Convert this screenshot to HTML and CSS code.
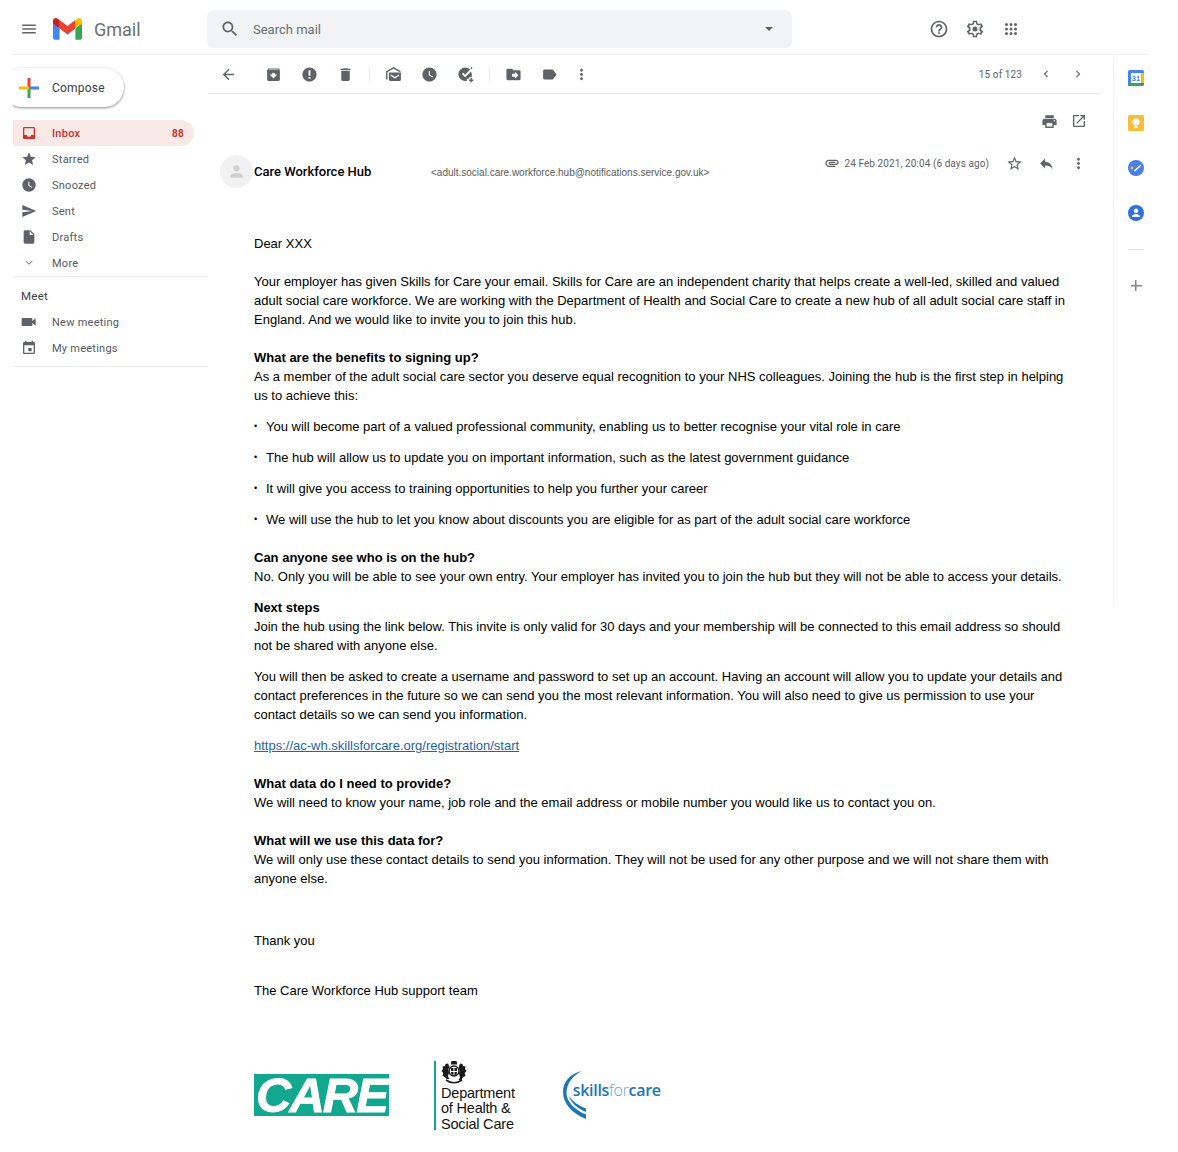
FILE: index.html
```html
<!DOCTYPE html>
<html lang="en">
<head>
<meta charset="utf-8">
<title>Gmail</title>
<link rel="stylesheet" href="styles.css">
</head>
<body>
<svg class="sprite" aria-hidden="true">
  <symbol id="i-menu" viewBox="0 0 24 24"><path d="M3 18h18v-2H3v2zm0-5h18v-2H3v2zm0-7v2h18V6H3z"/></symbol>
  <symbol id="i-search" viewBox="0 0 24 24"><path d="M15.5 14h-.79l-.28-.27C15.41 12.59 16 11.11 16 9.5 16 5.91 13.09 3 9.5 3S3 5.91 3 9.5 5.91 16 9.5 16c1.61 0 3.09-.59 4.23-1.57l.27.28v.79l5 4.99L20.49 19l-4.99-5zm-6 0C7.01 14 5 11.99 5 9.5S7.01 5 9.5 5 14 7.01 14 9.5 11.99 14 9.5 14z"/></symbol>
  <symbol id="i-help" viewBox="0 0 24 24"><path d="M11 18h2v-2h-2v2zm1-16C6.48 2 2 6.48 2 12s4.48 10 10 10 10-4.48 10-10S17.52 2 12 2zm0 18c-4.41 0-8-3.59-8-8s3.59-8 8-8 8 3.59 8 8-3.59 8-8 8zm0-14c-2.21 0-4 1.79-4 4h2c0-1.1.9-2 2-2s2 .9 2 2c0 2-3 1.75-3 5h2c0-2.25 3-2.5 3-5 0-2.21-1.79-4-4-4z"/></symbol>
  <symbol id="i-gear" viewBox="0 0 24 24"><path fill-rule="evenodd" d="M19.43 12.98c.04-.32.07-.64.07-.98s-.03-.66-.07-.98l2.11-1.65c.19-.15.24-.42.12-.64l-2-3.46c-.12-.22-.39-.3-.61-.22l-2.49 1c-.52-.4-1.08-.73-1.69-.98l-.38-2.65C14.46 2.18 14.25 2 14 2h-4c-.25 0-.46.18-.49.42l-.38 2.65c-.61.25-1.17.59-1.69.98l-2.49-1c-.23-.09-.49 0-.61.22l-2 3.46c-.13.22-.07.49.12.64l2.11 1.65c-.04.32-.07.65-.07.98s.03.66.07.98l-2.11 1.65c-.19.15-.24.42-.12.64l2 3.46c.12.22.39.3.61.22l2.49-1c.52.4 1.08.73 1.69.98l.38 2.65c.03.24.24.42.49.42h4c.25 0 .46-.18.49-.42l.38-2.65c.61-.25 1.17-.59 1.69-.98l2.49 1c.23.09.49 0 .61-.22l2-3.46c.12-.22.07-.49-.12-.64l-2.11-1.65zM17.5 12c0 .4-.05.8-.14 1.2l-.1.6 1.83 1.43-1.1 1.9-2.16-.87-.5.38c-.44.33-.9.6-1.4.8l-.57.24-.33 2.3h-2.06l-.33-2.3-.57-.24c-.5-.2-.96-.47-1.4-.8l-.5-.38-2.16.87-1.1-1.9 1.83-1.43-.1-.6c-.09-.4-.14-.8-.14-1.2s.05-.8.14-1.2l.1-.6-1.83-1.43 1.1-1.9 2.16.87.5-.38c.44-.33.9-.6 1.4-.8l.57-.24.33-2.3h2.06l.33 2.3.57.24c.5.2.96.47 1.4.8l.5.38 2.16-.87 1.1 1.9-1.83 1.43.1.6c.09.4.14.8.14 1.2z"/><circle cx="12" cy="12" r="3"/></symbol>
  <symbol id="i-apps" viewBox="0 0 24 24"><path d="M6 8a2 2 0 100-4 2 2 0 000 4zm6 0a2 2 0 100-4 2 2 0 000 4zm6 0a2 2 0 100-4 2 2 0 000 4zM6 14a2 2 0 100-4 2 2 0 000 4zm6 0a2 2 0 100-4 2 2 0 000 4zm6 0a2 2 0 100-4 2 2 0 000 4zM6 20a2 2 0 100-4 2 2 0 000 4zm6 0a2 2 0 100-4 2 2 0 000 4zm6 0a2 2 0 100-4 2 2 0 000 4z"/></symbol>
  <symbol id="i-back" viewBox="0 0 24 24"><path d="M20 11H7.83l5.59-5.59L12 4l-8 8 8 8 1.41-1.41L7.83 13H20v-2z"/></symbol>
  <symbol id="i-archive" viewBox="0 0 24 24"><path d="M20.54 5.23l-1.39-1.68C18.88 3.21 18.47 3 18 3H6c-.47 0-.88.21-1.16.55L3.46 5.23C3.17 5.57 3 6.02 3 6.5V19c0 1.1.9 2 2 2h14c1.1 0 2-.9 2-2V6.5c0-.48-.17-.93-.46-1.27zM12 17.5L6.5 12H10v-2h4v2h3.5L12 17.5zM5.12 5l.81-1h12l.94 1H5.12z"/></symbol>
  <symbol id="i-report" viewBox="0 0 24 24"><path d="M12 2C6.48 2 2 6.48 2 12s4.48 10 10 10 10-4.48 10-10S17.52 2 12 2zm1.3 16h-2.6v-2.6h2.6V18zm0-4.4h-2.6V6h2.6v7.6z"/></symbol>
  <symbol id="i-delete" viewBox="0 0 24 24"><path d="M6 19c0 1.1.9 2 2 2h8c1.1 0 2-.9 2-2V7H6v12zM19 4h-3.5l-1-1h-5l-1 1H5v2h14V4z"/></symbol>
  <symbol id="i-unread" viewBox="0 0 24 24"><path d="M12 1.500L1.500 7.500V19h2V8.600L12 3.800l8.500 4.700L22.500 7.500z"/><path fill-rule="evenodd" d="M5.500 9h17v10a2 2 0 01-2 2h-13a2 2 0 01-2-2zM8 11.500l6 4 6-4v2.200l-6 4-6-4z"/></symbol>
  <symbol id="i-clock" viewBox="0 0 24 24"><path d="M12 2C6.480 2 2 6.480 2 12s4.480 10 10 10 10-4.480 10-10S17.520 2 12 2zm4.200 14.200L11 13V7h1.500v5.200l4.500 2.700-.8 1.300z"/></symbol>
  <symbol id="i-task" viewBox="0 0 24 24"><path fill-rule="evenodd" d="M11.500 2a9.500 9.500 0 000 19c.9 0 1.700-.1 2.500-.3V18h3v-2h3.600c.3-1.100.4-2.200.4-3.400 0-1.800-.5-3.500-1.300-5L11.500 15.800 7 11.300l1.700-1.700 2.800 2.800 7.100-7.300A9.500 9.500 0 0011.500 2z"/><path d="M21.800 2.800L20.400 1.500l-1.600 1.800 1.400 1.300zM19 17h2v2h2v2h-2v2h-2v-2h-2v-2h2z"/></symbol>
  <symbol id="i-move" viewBox="0 0 24 24"><path d="M20 6h-8l-2-2H4c-1.100 0-2 .9-2 2v12c0 1.100.9 2 2 2h16c1.100 0 2-.9 2-2V8c0-1.100-.9-2-2-2zm-6 12v-3h-4v-4h4V8l5 5-5 5z"/></symbol>
  <symbol id="i-label" viewBox="0 0 24 24"><path d="M17.630 5.840C17.270 5.330 16.670 5 16 5L5 5.010C3.900 5.010 3 5.900 3 7v10c0 1.100.9 1.990 2 1.990L16 19c.67 0 1.270-.33 1.630-.84L22 12l-4.370-6.160z"/></symbol>
  <symbol id="i-more" viewBox="0 0 24 24"><path d="M12 8c1.100 0 2-.9 2-2s-.9-2-2-2-2 .9-2 2 .9 2 2 2zm0 2c-1.100 0-2 .9-2 2s.9 2 2 2 2-.9 2-2-.9-2-2-2zm0 6c-1.100 0-2 .9-2 2s.9 2 2 2 2-.9 2-2-.9-2-2-2z"/></symbol>
  <symbol id="i-prev" viewBox="0 0 24 24"><path d="M15.410 7.410L14 6l-6 6 6 6 1.410-1.410L10.830 12z"/></symbol>
  <symbol id="i-next" viewBox="0 0 24 24"><path d="M10 6L8.590 7.410 13.170 12l-4.580 4.590L10 18l6-6z"/></symbol>
  <symbol id="i-print" viewBox="0 0 24 24"><path d="M19 8H5c-1.660 0-3 1.340-3 3v6h4v4h12v-4h4v-6c0-1.660-1.340-3-3-3zm-3 11H8v-5h8v5zm3-7c-.55 0-1-.45-1-1s.45-1 1-1 1 .45 1 1-.45 1-1 1zm-1-9H6v4h12V3z"/></symbol>
  <symbol id="i-open" viewBox="0 0 24 24"><path d="M19 19H5V5h7V3H5c-1.110 0-2 .9-2 2v14c0 1.100.89 2 2 2h14c1.100 0 2-.9 2-2v-7h-2v7zM14 3v2h3.590l-9.830 9.830 1.410 1.410L19 6.410V10h2V3h-7z"/></symbol>
  <symbol id="i-star-o" viewBox="0 0 24 24"><path d="M22 9.240l-7.190-.62L12 2 9.190 8.630 2 9.240l5.460 4.730L5.820 21 12 17.270 18.180 21l-1.630-7.030L22 9.240zM12 15.400l-3.760 2.270 1-4.280-3.320-2.880 4.380-.38L12 6.100l1.710 4.040 4.380.38-3.320 2.880 1 4.280L12 15.400z"/></symbol>
  <symbol id="i-star" viewBox="0 0 24 24"><path d="M12 17.270L18.180 21l-1.640-7.030L22 9.240l-7.190-.61L12 2 9.190 8.630 2 9.240l5.460 4.730L5.820 21z"/></symbol>
  <symbol id="i-reply" viewBox="0 0 24 24"><path d="M10 9V5l-7 7 7 7v-4.100c5 0 8.500 1.600 11 5.100-1-5-4-10-11-11z"/></symbol>
  <symbol id="i-attach" viewBox="0 0 24 24"><path d="M2 12.500C2 9.460 4.460 7 7.500 7H18c2.210 0 4 1.790 4 4s-1.790 4-4 4H9.500C8.120 15 7 13.880 7 12.500S8.120 10 9.500 10H17v2H9.410c-.55 0-.55 1 0 1H18c1.100 0 2-.9 2-2s-.9-2-2-2H7.500C5.570 9 4 10.570 4 12.500S5.570 16 7.500 16H17v2H7.500C4.460 18 2 15.540 2 12.500z"/></symbol>
  <symbol id="i-inbox" viewBox="0 0 24 24"><path d="M19 3H4.990c-1.110 0-1.980.89-1.980 2L3 19c0 1.100.88 2 1.990 2H19c1.100 0 2-.9 2-2V5c0-1.110-.9-2-2-2zm0 12h-4c0 1.660-1.350 3-3 3s-2.990-1.340-3-3H4.990V5H19v10z"/></symbol>
  <symbol id="i-send" viewBox="0 0 24 24"><path d="M2.010 21L23 12 2.010 3 2 10l15 2-15 2z"/></symbol>
  <symbol id="i-draft" viewBox="0 0 24 24"><path d="M6 2c-1.100 0-1.990.9-1.990 2L4 20c0 1.100.89 2 1.990 2H18c1.100 0 2-.9 2-2V8l-6-6H6zm7 7V3.500L18.500 9H13z"/></symbol>
  <symbol id="i-expand" viewBox="0 0 24 24"><path d="M16.590 8.590L12 13.170 7.410 8.590 6.700 9.300 12 14.600l5.300-5.300z"/></symbol>
  <symbol id="i-video" viewBox="0 0 24 24"><path d="M17 10.500V7c0-.55-.45-1-1-1H2c-.55 0-1 .45-1 1v10c0 .55.45 1 1 1h14c.55 0 1-.45 1-1v-3.500l5 4v-11l-5 4z"/></symbol>
  <symbol id="i-event" viewBox="0 0 24 24"><path d="M16 12h-5v5h5v-5zM16 1v2H8V1H6v2H5c-1.110 0-1.990.9-1.990 2L3 19c0 1.100.89 2 2 2h14c1.100 0 2-.9 2-2V5c0-1.100-.9-2-2-2h-1V1h-2zm3 18H5V8h14v11z"/></symbol>
  <symbol id="i-person" viewBox="0 0 24 24"><path d="M12 12c2.210 0 4-1.790 4-4s-1.790-4-4-4-4 1.790-4 4 1.790 4 4 4zm0 2c-2.670 0-8 1.340-8 4v2h16v-2c0-2.660-5.330-4-8-4z"/></symbol>
</svg>

<div class="page">
  <header class="topbar">
    <div class="brand">
      <svg class="ico ico-18 menu-ico"><use href="#i-menu"/></svg>
      <svg class="gmail-m" viewBox="0 0 256 193">
        <path fill="#4285F4" d="M58.180 192.050V93.140L27.500 65.080 0 49.500v125.100c0 9.660 7.830 17.450 17.450 17.450h40.730z"/>
        <path fill="#34A853" d="M197.820 192.050h40.730c9.650 0 17.450-7.830 17.450-17.450V49.500l-31.160 17.840-27.020 25.800v98.910z"/>
        <path fill="#EA4335" d="M58.180 93.140l-4.170-38.650 4.170-36.990L128 69.870l69.820-52.370 4.670 34.990-4.670 40.650L128 145.500z"/>
        <path fill="#FBBC04" d="M197.820 17.500V93.140L256 49.500V26.230c0-21.590-24.640-33.880-41.890-20.940l-16.290 12.210z"/>
        <path fill="#C5221F" d="M0 49.500l26.760 20.070L58.180 93.140V17.500L41.890 5.290C24.610-7.650 0 4.640 0 26.230V49.500z"/>
      </svg>
      <span class="gmail-word">Gmail</span>
    </div>
    <div class="search">
      <svg class="ico ico-20"><use href="#i-search"/></svg>
      <span class="search-text">Search mail</span>
      <span class="caret"></span>
    </div>
    <div class="top-actions">
      <span class="btn-36"><svg class="ico ico-20"><use href="#i-help"/></svg></span>
      <span class="btn-36"><svg class="ico ico-20"><use href="#i-gear"/></svg></span>
      <span class="btn-36"><svg class="ico ico-18"><use href="#i-apps"/></svg></span>
    </div>
  </header>

  <div class="layout">
    <nav class="sidebar">
      <button class="compose">
        <svg class="compose-plus" viewBox="0 0 20 20">
          <rect x="8.500" y="0" width="3" height="10" fill="#EA4335"/>
          <rect x="10" y="8.500" width="10" height="3" fill="#4285F4"/>
          <rect x="8.500" y="10" width="3" height="10" fill="#34A853"/>
          <rect x="0" y="8.500" width="10" height="3" fill="#FBBC04"/>
        </svg>
        <span>Compose</span>
      </button>
      <ul class="nav-list">
        <li class="nav-item active"><svg class="ico nav-ico"><use href="#i-inbox"/></svg><span class="nav-label">Inbox</span><span class="count">88</span></li>
        <li class="nav-item"><svg class="ico nav-ico"><use href="#i-star"/></svg><span class="nav-label">Starred</span></li>
        <li class="nav-item"><svg class="ico nav-ico"><use href="#i-clock"/></svg><span class="nav-label">Snoozed</span></li>
        <li class="nav-item"><svg class="ico nav-ico"><use href="#i-send"/></svg><span class="nav-label">Sent</span></li>
        <li class="nav-item"><svg class="ico nav-ico"><use href="#i-draft"/></svg><span class="nav-label">Drafts</span></li>
        <li class="nav-item"><svg class="ico nav-ico"><use href="#i-expand"/></svg><span class="nav-label">More</span></li>
      </ul>
      <div class="meet">
        <div class="meet-title">Meet</div>
        <ul class="nav-list">
          <li class="nav-item"><svg class="ico nav-ico"><use href="#i-video"/></svg><span class="nav-label">New meeting</span></li>
          <li class="nav-item"><svg class="ico nav-ico"><use href="#i-event"/></svg><span class="nav-label">My meetings</span></li>
        </ul>
      </div>
    </nav>

    <main class="main">
      <div class="toolbar">
        <span class="tool back"><svg class="ico ico-17"><use href="#i-back"/></svg></span>
        <span class="tool"><svg class="ico ico-17"><use href="#i-archive"/></svg></span>
        <span class="tool"><svg class="ico ico-17"><use href="#i-report"/></svg></span>
        <span class="tool"><svg class="ico ico-17"><use href="#i-delete"/></svg></span>
        <span class="sep"></span>
        <span class="tool"><svg class="ico ico-17"><use href="#i-unread"/></svg></span>
        <span class="tool"><svg class="ico ico-17"><use href="#i-clock"/></svg></span>
        <span class="tool"><svg class="ico ico-17"><use href="#i-task"/></svg></span>
        <span class="sep"></span>
        <span class="tool"><svg class="ico ico-17"><use href="#i-move"/></svg></span>
        <span class="tool"><svg class="ico ico-17"><use href="#i-label"/></svg></span>
        <span class="tool narrow"><svg class="ico ico-17"><use href="#i-more"/></svg></span>
        <span class="pager">15 of 123</span>
        <span class="tool pg"><svg class="ico ico-14"><use href="#i-prev"/></svg></span>
        <span class="tool pg"><svg class="ico ico-14"><use href="#i-next"/></svg></span>
      </div>

      <div class="print-row">
        <span class="print-btn"><svg class="ico ico-17"><use href="#i-print"/></svg></span>
        <span class="print-btn"><svg class="ico ico-16"><use href="#i-open"/></svg></span>
      </div>

      <div class="msg-head">
        <span class="avatar"><svg class="avatar-ico"><use href="#i-person"/></svg></span>
        <div class="sender">
          <span class="sender-name">Care Workforce Hub</span>
          <span class="sender-mail">&lt;adult.social.care.workforce.hub@notifications.service.gov.uk&gt;</span>
        </div>
        <div class="msg-meta">
          <svg class="ico ico-16"><use href="#i-attach"/></svg>
          <span class="msg-date">24 Feb 2021, 20:04 (6 days ago)</span>
          <span class="meta-btn first"><svg class="ico ico-17"><use href="#i-star-o"/></svg></span>
          <span class="meta-btn"><svg class="ico ico-17"><use href="#i-reply"/></svg></span>
          <span class="meta-btn"><svg class="ico ico-17"><use href="#i-more"/></svg></span>
        </div>
      </div>

      <article class="mail">
        <p class="gap-l">Dear XXX</p>
        <p class="gap-l">Your employer has given Skills for Care your email. Skills for Care are an independent charity that helps create a well-led, skilled and valued adult social care workforce. We are working with the Department of Health and Social Care to create a new hub of all adult social care staff in England. And we would like to invite you to join this hub.</p>
        <h3>What are the benefits to signing up?</h3>
        <p class="gap-s">As a member of the adult social care sector you deserve equal recognition to your NHS colleagues. Joining the hub is the first step in helping us to achieve this:</p>
        <ul class="bullets">
          <li>You will become part of a valued professional community, enabling us to better recognise your vital role in care</li>
          <li>The hub will allow us to update you on important information, such as the latest government guidance</li>
          <li>It will give you access to training opportunities to help you further your career</li>
          <li>We will use the hub to let you know about discounts you are eligible for as part of the adult social care workforce</li>
        </ul>
        <h3>Can anyone see who is on the hub?</h3>
        <p class="gap-s">No. Only you will be able to see your own entry. Your employer has invited you to join the hub but they will not be able to access your details.</p>
        <h3>Next steps</h3>
        <p class="gap-s">Join the hub using the link below. This invite is only valid for 30 days and your membership will be connected to this email address so should not be shared with anyone else.</p>
        <p class="gap-s">You will then be asked to create a username and password to set up an account. Having an account will allow you to update your details and contact preferences in the future so we can send you the most relevant information. You will also need to give us permission to use your contact details so we can send you information.</p>
        <p class="gap-l"><a class="mail-link" href="#">https://ac-wh.skillsforcare.org/registration/start</a></p>
        <h3>What data do I need to provide?</h3>
        <p class="gap-l">We will need to know your name, job role and the email address or mobile number you would like us to contact you on.</p>
        <h3>What will we use this data for?</h3>
        <p class="gap-xl">We will only use these contact details to send you information. They will not be used for any other purpose and we will not share them with anyone else.</p>
        <p class="gap-team">Thank you</p>
        <p>The Care Workforce Hub support team</p>

        <div class="logos">
          <div class="logo-care">CARE</div>
          <div class="logo-dhsc">
            <svg class="crest" viewBox="0 0 26 23">
              <path fill="#1a1a1a" d="M10.500 0h5l.8 3.500h-6.600z"/>
              <path fill="#1a1a1a" d="M7 2.500l1.500 3.500-1.500 2.500 1 3-1 4 1.500 2.500H5.500L4 16 1.500 15l.8-3-1.800-2 1.500-2-.5-2.500 2.500-.5L4.500 3z"/>
              <path fill="#1a1a1a" d="M19 2.500l2.500.5.5 2 2.500.5-.5 2.500 1.500 2-1.800 2 .8 3-2.500 1-1.500 3h-3l1.500-2.500-1-4 1-3-1.500-2.500z"/>
              <circle cx="13" cy="10" r="5.800" fill="#1a1a1a"/>
              <circle cx="13" cy="10" r="4.300" fill="#fff"/>
              <path fill="#1a1a1a" d="M10 7h6v4.500c0 1.500-1.500 2.500-3 3-1.500-.5-3-1.500-3-3z"/>
              <path fill="#fff" d="M12.500 7h1v7h-1zM10 10h6v1h-6z"/>
              <path fill="none" stroke="#1a1a1a" stroke-width="1.600" d="M5 19c5 3.500 11 3.500 16 0"/>
            </svg>
            <div class="dhsc-text">Department<br>of Health &amp;<br>Social Care</div>
          </div>
          <div class="logo-sfc">
            <svg class="sfc-arcs" viewBox="0 0 24 48">
              <path fill="#1b75bb" d="M19 0C7 2.500 0 11 0 21c0 12 10 22 23 27v-4.500C12 39 3.500 31 3.500 22 3.500 12 10 4.500 19 0z"/>
              <path fill="#1b75bb" d="M6 25c1.500 6.500 8 12 17 16v-3.500C15 34.500 9 30 6 25z"/>
            </svg>
            <span class="sfc-word">skills<span class="sfc-for">for</span>care</span>
          </div>
        </div>
      </article>
    </main>

    <aside class="rail">
      <svg class="rail-ico" viewBox="0 0 16 16">
        <rect width="16" height="16" rx="1.500" fill="#4285F4"/>
        <rect x="3" y="3" width="10" height="10" fill="#fff"/>
        <rect x="13" y="3" width="3" height="10" fill="#FBBC04"/>
        <rect y="13" width="13" height="3" fill="#34A853"/>
        <path d="M13 13h3l-3 3z" fill="#EA4335"/>
        <text class="cal-num" x="8" y="11" text-anchor="middle">31</text>
      </svg>
      <svg class="rail-ico" viewBox="0 0 16 16">
        <rect width="16" height="16" rx="1.500" fill="#F6BF3B"/>
        <circle cx="8" cy="7" r="3.500" fill="#fff"/>
        <rect x="6.200" y="11.200" width="3.600" height="1.400" fill="#fff"/>
      </svg>
      <svg class="rail-ico" viewBox="0 0 16 16">
        <circle cx="8" cy="8" r="8" fill="#4A7FE5"/>
        <path d="M6 10.500l6.500-6 .9 1-6.500 6.300z" fill="#fff"/>
        <circle cx="4" cy="8" r="1.400" fill="#F6BF3B"/>
      </svg>
      <svg class="rail-ico" viewBox="0 0 16 16">
        <circle cx="8" cy="8" r="8" fill="#2F6FDE"/>
        <circle cx="8" cy="5.800" r="2.300" fill="#fff"/>
        <path d="M3.800 12c0-2 2.400-3 4.200-3s4.200 1 4.200 3z" fill="#fff"/>
      </svg>
      <span class="rail-line"></span>
      <span class="rail-plus"></span>
    </aside>
  </div>
</div>
</body>
</html>
```

FILE: styles.css
```css
* { box-sizing: border-box; }
html, body { margin: 0; padding: 0; background: #fff; }
body { font-family: "Liberation Sans", Arial, sans-serif; color: #000; }
.sprite { display: none; }
.page { width: 1148px; margin-left: 0; padding-left: 13px; }

.ico { display: block; fill: #5f6368; flex: none; }
.ico-14 { width: 14px; height: 14px; }
.ico-16 { width: 16px; height: 16px; }
.ico-17 { width: 17px; height: 17px; }
.ico-18 { width: 18px; height: 18px; }
.ico-20 { width: 20px; height: 20px; }

/* top bar */
.topbar { height: 55px; display: flex; align-items: center; border-bottom: 1px solid #eceff1; padding-top: 4px; }
.brand { width: 194px; display: flex; align-items: center; padding-left: 7px; }
.gmail-m { width: 29px; height: 22px; margin-left: 15px; display: block; }
.gmail-word { font-family: Roboto, sans-serif; font-size: 18px; color: #6b6f73; margin-left: 12px; }
.search { width: 585px; height: 38px; background: #f1f3f4; border-radius: 7px; display: flex; align-items: center; padding-left: 13px; }
.search-text { font-family: Roboto, sans-serif; font-size: 13px; color: #6b6f73; margin-left: 13px; }
.caret { margin-left: auto; margin-right: 19px; width: 0; height: 0; border-left: 4.500px solid transparent; border-right: 4.500px solid transparent; border-top: 4.500px solid #5f6368; }
.top-actions { display: flex; margin-left: 129px; }
.btn-36 { width: 36px; height: 36px; display: flex; align-items: center; justify-content: center; }

/* layout */
.layout { display: flex; align-items: flex-start; }
.sidebar { width: 195px; overflow: hidden; padding-top: 13px; flex: none; padding-bottom: 8px; }
.main { width: 892px; flex: none; }

/* sidebar */
.compose { margin-left: -11px; width: 122px; height: 39px; border: 0; border-radius: 20px; background: #fff; box-shadow: 0 1px 3px rgba(60,64,67,.45), 0 1px 2px rgba(60,64,67,.2); display: flex; align-items: center; padding: 0 0 0 17px; margin-bottom: 13px; font-family: Roboto, sans-serif; font-size: 12px; letter-spacing: .2px; color: #3c4043; }
.compose-plus { width: 20px; height: 20px; margin-right: 13px; flex: none; }
.nav-list { list-style: none; margin: 0; padding: 0; }
.nav-item { width: 181px; height: 26px; display: flex; align-items: center; padding: 0 10px 0 8px; font-family: Roboto, sans-serif; font-size: 11px; letter-spacing: .25px; color: #55595d; border-radius: 0 13px 13px 0; }
.nav-ico { width: 16px; height: 16px; margin-right: 15px; }
.nav-item.active { background: #f8e8e6; color: #c5352b; font-weight: 500; }
.nav-item.active .nav-ico { fill: #d93025; }
.count { margin-left: auto; font-size: 10px; font-weight: 700; }
.meet { border-top: 1px solid #e8eaed; border-bottom: 1px solid #e8eaed; padding-bottom: 5px; }
.meet-title { font-family: Roboto, sans-serif; font-size: 11.500px; line-height: 12px; letter-spacing: .25px; color: #3c4043; padding: 13px 0 7px 8px; }

/* toolbar */
.toolbar { height: 39px; border-bottom: 1px solid #e8eaed; display: flex; align-items: center; padding-left: 2px; }
.tool { width: 36px; height: 36px; display: flex; align-items: center; justify-content: center; }
.tool.back { margin-right: 9px; }
.tool.narrow { width: 28px; }
.tool.pg { width: 32px; }
.sep { width: 1px; height: 16px; background: #e8eaed; margin: 0 5px 0 6px; }
.pager { margin-left: auto; font-family: Roboto, sans-serif; font-size: 10px; letter-spacing: .1px; color: #5f6368; margin-right: 8px; }
.toolbar .pg:last-child { margin-right: 6px; }

.print-row { height: 54px; display: flex; justify-content: flex-end; padding-right: 6px; }
.print-btn { width: 30px; display: flex; align-items: center; justify-content: center; }

/* message head */
.msg-head { display: flex; align-items: flex-start; padding: 7px 6px 0 12px; height: 40px; }
.avatar { width: 33px; height: 33px; border-radius: 50%; background: #f1f1f1; display: flex; align-items: center; justify-content: center; flex: none; }
.avatar-ico { width: 19px; height: 19px; fill: #cfd0d1; display: block; }
.sender { height: 33px; margin-left: 1px; display: flex; align-items: center; }
.sender-name { font-family: Roboto, sans-serif; font-weight: 500; font-size: 13px; color: #000; width: 177px; }
.sender-mail { font-size: 10px; color: #5a5a5a; padding-top: 2px; }
.msg-meta { margin-left: auto; height: 16px; display: flex; align-items: center; }
.msg-date { font-family: Roboto, sans-serif; font-size: 10px; letter-spacing: .08px; color: #5f6368; margin-left: 5px; }
.meta-btn { width: 32px; display: flex; justify-content: center; }
.meta-btn.first { margin-left: 9px; }

/* email body */
.mail { margin: 46px 0 0 46px; width: 814px; font-size: 13px; line-height: 19px; }
.mail p { margin: 0; }
.mail h3 { margin: 0; font-size: 13px; line-height: 19px; font-weight: 700; }
.mail p.gap-l { margin-bottom: 19px; }
.mail p.gap-s { margin-bottom: 12px; }
.mail p.gap-xl { margin-bottom: 43px; }
.mail p.gap-team { margin-bottom: 31px; }
.bullets { list-style: none; margin: 0 0 19px; padding: 0; }
.bullets li { display: flex; padding-bottom: 12px; }
.bullets li:last-child { padding-bottom: 0; }
.bullets li::before { content: "•"; width: 12px; flex: none; font-size: 9px; }
.mail-link { color: #1a64ad; }

/* logos */
.logos { display: flex; align-items: center; margin-top: 60px; height: 70px; }
.logo-care { width: 135px; height: 42px; background: #12a88f; color: #fff; font-style: italic; font-weight: 700; font-size: 49px; line-height: 42px; letter-spacing: -2px; -webkit-text-stroke: .8px #fff; text-align: center; white-space: nowrap; }
.logo-dhsc { margin-left: 45px; height: 69px; border-left: 2px solid #12a88f; padding-left: 5px; color: #111; }
.crest { width: 26px; height: 23px; display: block; }
.dhsc-text { font-size: 14.500px; line-height: 15.500px; letter-spacing: -.2px; margin-top: 2px; }
.logo-sfc { margin-left: 48px; width: 110px; height: 50px; display: flex; align-items: center; }
.sfc-arcs { width: 24px; height: 48px; display: block; flex: none; }
.sfc-word { font-family: "Open Sans", sans-serif; font-weight: 600; font-size: 16px; color: #1b75bb; margin: -10px 0 0 -14px; letter-spacing: -.3px; white-space: nowrap; }
.sfc-for { color: #63a8de; font-weight: 300; }

/* right rail */
.rail { margin-left: 13px; width: 35px; height: 549px; border-left: 1px solid #f1f3f4; display: flex; flex-direction: column; align-items: center; padding: 15px 0 0 10px; flex: none; }
.rail-ico { width: 16px; height: 16px; display: block; margin-bottom: 29px; flex: none; }
.cal-num { font-family: "Liberation Sans", sans-serif; font-size: 7.500px; font-weight: 700; fill: #4285F4; }
.rail-line { width: 16px; height: 1px; background: #e0e0e0; margin-top: -1px; }
.rail-plus { width: 11px; height: 11px; margin-top: 30px; background: linear-gradient(#80868b, #80868b) center/100% 1.500px no-repeat, linear-gradient(#80868b, #80868b) center/1.500px 100% no-repeat; }
```
